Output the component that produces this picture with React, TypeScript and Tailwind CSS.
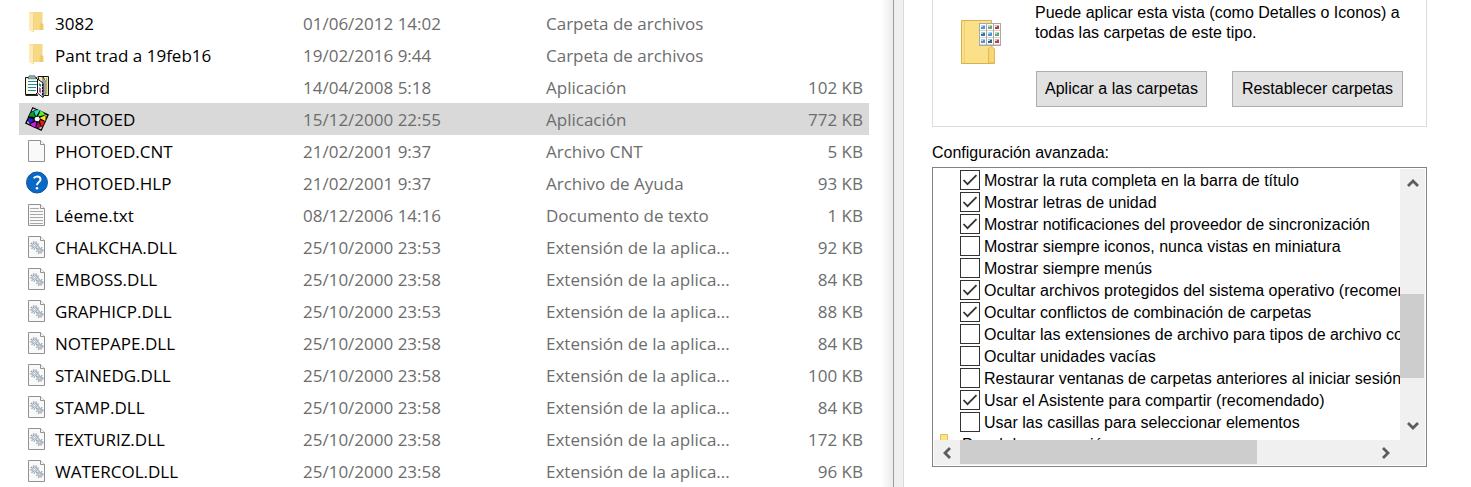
import React, { useState } from 'react';

type IconKind = 'folder' | 'clipboard' | 'photo' | 'blank' | 'help' | 'text' | 'dll';

const FILES: { name: string; date: string; type: string; size: string; icon: IconKind }[] = [
  { name: '3082', date: '01/06/2012 14:02', type: 'Carpeta de archivos', size: '', icon: 'folder' },
  { name: 'Pant trad a 19feb16', date: '19/02/2016 9:44', type: 'Carpeta de archivos', size: '', icon: 'folder' },
  { name: 'clipbrd', date: '14/04/2008 5:18', type: 'Aplicación', size: '102 KB', icon: 'clipboard' },
  { name: 'PHOTOED', date: '15/12/2000 22:55', type: 'Aplicación', size: '772 KB', icon: 'photo' },
  { name: 'PHOTOED.CNT', date: '21/02/2001 9:37', type: 'Archivo CNT', size: '5 KB', icon: 'blank' },
  { name: 'PHOTOED.HLP', date: '21/02/2001 9:37', type: 'Archivo de Ayuda', size: '93 KB', icon: 'help' },
  { name: 'Léeme.txt', date: '08/12/2006 14:16', type: 'Documento de texto', size: '1 KB', icon: 'text' },
  { name: 'CHALKCHA.DLL', date: '25/10/2000 23:53', type: 'Extensión de la aplica...', size: '92 KB', icon: 'dll' },
  { name: 'EMBOSS.DLL', date: '25/10/2000 23:58', type: 'Extensión de la aplica...', size: '84 KB', icon: 'dll' },
  { name: 'GRAPHICP.DLL', date: '25/10/2000 23:53', type: 'Extensión de la aplica...', size: '88 KB', icon: 'dll' },
  { name: 'NOTEPAPE.DLL', date: '25/10/2000 23:58', type: 'Extensión de la aplica...', size: '84 KB', icon: 'dll' },
  { name: 'STAINEDG.DLL', date: '25/10/2000 23:58', type: 'Extensión de la aplica...', size: '100 KB', icon: 'dll' },
  { name: 'STAMP.DLL', date: '25/10/2000 23:58', type: 'Extensión de la aplica...', size: '84 KB', icon: 'dll' },
  { name: 'TEXTURIZ.DLL', date: '25/10/2000 23:58', type: 'Extensión de la aplica...', size: '172 KB', icon: 'dll' },
  { name: 'WATERCOL.DLL', date: '25/10/2000 23:58', type: 'Extensión de la aplica...', size: '96 KB', icon: 'dll' },
];

const OPTIONS = [
  { label: 'Mostrar la ruta completa en la barra de título', checked: true },
  { label: 'Mostrar letras de unidad', checked: true },
  { label: 'Mostrar notificaciones del proveedor de sincronización', checked: true },
  { label: 'Mostrar siempre iconos, nunca vistas en miniatura', checked: false },
  { label: 'Mostrar siempre menús', checked: false },
  { label: 'Ocultar archivos protegidos del sistema operativo (recomendado)', checked: true },
  { label: 'Ocultar conflictos de combinación de carpetas', checked: true },
  { label: 'Ocultar las extensiones de archivo para tipos de archivo conocidos', checked: false },
  { label: 'Ocultar unidades vacías', checked: false },
  { label: 'Restaurar ventanas de carpetas anteriores al iniciar sesión', checked: false },
  { label: 'Usar el Asistente para compartir (recomendado)', checked: true },
  { label: 'Usar las casillas para seleccionar elementos', checked: false },
];

function Gear({ x, y, r }: { x: number; y: number; r: number }) {
  return (
    <g transform={`translate(${x} ${y})`} fill="none" stroke="#9aa5b1">
      <circle r={r} strokeWidth="1.6" strokeDasharray="1.3 1.2" />
      <circle r={r - 1.1} strokeWidth="0.9" fill="#e9ecef" />
      <circle r="1" strokeWidth="0.7" fill="#ffffff" />
    </g>
  );
}

function Page({ children }: { children?: React.ReactNode }) {
  return (
    <svg className="size-6 shrink-0" viewBox="0 0 24 24">
      <path d="M3.5 1.5h12l4 4v17h-16z" fill="#f9f9fa" stroke="#919191" />
      <path d="M15.5 1.5v4h4" fill="#ffffff" stroke="#919191" />
      {children}
    </svg>
  );
}

function FileIcon({ kind }: { kind: IconKind }) {
  switch (kind) {
    case 'folder':
      return (
        <svg className="size-6 shrink-0" viewBox="0 0 24 24">
          <path d="M8 1h9.500v11.500l.8.8V19H8z" fill="#f6d985" />
          <path d="M14.500 13l1.500-1.500 2.300 1.800V19h-3.800z" fill="#efcb70" />
          <path d="M4 1h5v18H4z" fill="#f8df95" />
          <path d="M4 1l4.500 2.500v18L4 19z" fill="#fdeab4" />
          <path d="M8.500 3.500v17.500" stroke="#efcf78" strokeWidth="0.8" />
        </svg>
      );
    case 'clipboard':
      return (
        <svg className="size-6 shrink-0" viewBox="0 0 24 24">
          <path d="M.5 2.500h11v17H.5z" fill="#fbfbd6" stroke="#111111" />
          <path d="M3 4h9v14H3z" fill="#ffffff" />
          <path d="M4 .8h6l1 3H3z" fill="#8fb0b4" stroke="#35565c" strokeWidth="0.6" />
          <path d="M3 6.500h9M3 9.500h9M3 12.500h8M3 15.500h8" stroke="#228c96" />
          <path d="M.5 20.200h12.500" stroke="#111111" strokeWidth="1.400" />
          <path d="M13 1.500h10.500v19H17z" fill="#efedae" stroke="#111111" />
          <path d="M17 4h4v14h-4z" fill="#ffffff" />
          <path d="M21.700 3v16" stroke="#a9a763" />
          <path d="M18 2l2 3v15l-2 2z" fill="#ffffff" stroke="#111111" strokeWidth="0.8" />
          <path d="M12.500 4l5.500 4v14.500l-5.500-4.500z" fill="#ffffff" stroke="#111111" />
          <path d="M14 8l2 1.400v2.500L14 10.500z" fill="#258a4f" />
          <path d="M14 12l2 1.400v5L14 17z" fill="#b857c2" />
          <path d="M17.500 9v12" stroke="#111111" strokeWidth="1.200" strokeDasharray="2 1" />
        </svg>
      );
    case 'photo':
      return (
        <svg className="size-6 shrink-0" viewBox="0 0 24 24">
          <path d="M7.500 0L24 7.500 16.500 24 0 16.500z" fill="#000000" />
          <path d="M8 1.500l3 1.300-4.500 2zM22 8.200l-1.500 3.500-2-5zM16 22.200l-3.500-1.500 5-2zM1.800 16l1.700-3.500 2 5z" fill="#d0d0d0" />
          <circle cx="12" cy="12" r="9" fill="#000000" />
          <path d="M10 10L4 9.500Q5 5.500 8.500 4z" fill="#0c9b28" />
          <path d="M11 9.500L9 4q3-1.500 6-.8z" fill="#22dfd0" />
          <path d="M13 9.500L15.500 3.500Q19 5 20 8z" fill="#59ee24" />
          <path d="M14.500 11l5.500-2.500q1.300 3 .3 5.500z" fill="#f6ee18" />
          <path d="M14.500 13l5.300 1.500Q19 18 16.500 19.500z" fill="#ef1424" />
          <path d="M13 14.500l3 5Q13.500 21 11 20.500z" fill="#a00d50" />
          <path d="M11 14.500l-.5 6Q7 20 5 17z" fill="#cc1ce8" />
          <path d="M9.500 13l-5 3.500Q3 13.500 3.500 10.500z" fill="#2a25e0" />
          <path d="M10.500 10l3-.3 1.500 2.300-1.500 2.300-3-.3-1-2z" fill="#ffffff" />
        </svg>
      );
    case 'help':
      return (
        <svg className="size-6 shrink-0" viewBox="0 0 24 24">
          <circle cx="12" cy="11.500" r="10.500" fill="#0868c5" stroke="#07539f" />
          <path d="M8.800 7.400q1-2 3.300-2 3.400 0 3.400 2.900 0 1.700-1.800 3-1.700 1.200-1.700 3" fill="none" stroke="#ffffff" strokeWidth="2" />
          <circle cx="12" cy="17.200" r="1.300" fill="#ffffff" />
        </svg>
      );
    case 'text':
      return (
        <Page>
          <path d="M5 5.500h9M5 8.500h13M5 11.500h13M5 14.500h13M5 17.500h13M5 20.500h13" stroke="#a8a8a8" />
        </Page>
      );
    case 'dll':
      return (
        <Page>
          <Gear x={9.500} y={10.500} r={3.600} />
          <Gear x={14.800} y={15.200} r={3} />
        </Page>
      );
    default:
      return <Page />;
  }
}

function PreviewFolder() {
  const dots = ['#4f94cf', '#6fa66c', '#c43c2c', '#3e6ea8', '#4f94cf', '#6fa66c', '#4f94cf', '#35618f', '#c43c2c'];
  return (
    <svg className="h-11 w-10" viewBox="0 0 40 44">
      <path d="M.5.5h30v26l3 3v14H.5z" fill="#fbe08a" stroke="#d9b14a" />
      <path d="M3.500 1v42" stroke="#f3cf6c" />
      <path d="M27.500 43V29l3-3 3 3v14z" fill="#f7d675" stroke="#e2b94f" />
      <path d="M18 3h22v23H18z" fill="#a9a9a9" />
      {dots.map((color, i) => (
        <g key={i} transform={`translate(${19 + (i % 3) * 7} ${4 + Math.floor(i / 3) * 7})`}>
          <path d="M0 0h6v6.500H0z" fill="#ffffff" />
          <path d="M1 1.500h4v3.500H1z" fill={color} />
          <path d="M1 1.500h2v1.500H1z" fill="#b9d8ee" />
        </g>
      ))}
    </svg>
  );
}

function Chevron({ d }: { d: string }) {
  return (
    <svg className="size-3" viewBox="0 0 12 12" fill="none" stroke="#5c5c5c" strokeWidth="2.800">
      <path d={d} />
    </svg>
  );
}

export default function App() {
  const [selected, setSelected] = useState('PHOTOED');
  const [checks, setChecks] = useState(OPTIONS.map((o) => o.checked));

  const toggle = (index: number) => {
    setChecks((prev) => prev.map((c, i) => (i === index ? !c : c)));
  };

  return (
    <main className="grid grid-cols-[893fr_11px_567fr] bg-white text-black">
      {/* File list */}
      <section className="min-w-0 overflow-hidden bg-linear-to-l from-[#ececec] to-white to-[12px] pt-[7px] pr-6 pl-[19px] font-['Open_Sans',sans-serif] text-[17px] leading-6">
        <table className="w-full table-fixed whitespace-nowrap">
          <colgroup>
            <col className="w-[284px]" />
            <col className="w-[243px]" />
            <col />
            <col className="w-[120px]" />
          </colgroup>
          <tbody className="text-[#6d6d6d]">
            {FILES.map((file) => (
              <tr
                key={file.name}
                onClick={() => setSelected(file.name)}
                className={`h-8 ${selected === file.name ? 'bg-[#d9d9d9]' : ''}`}
              >
                <td className="p-0 text-black">
                  <div className="flex items-center gap-[6px] pl-[6px]">
                    <FileIcon kind={file.icon} />
                    <span className="pt-0.5">{file.name}</span>
                  </div>
                </td>
                <td className="p-0 pt-0.5">{file.date}</td>
                <td className="p-0 pt-0.5">{file.type}</td>
                <td className="p-0 pt-0.5 pr-[6px] text-right">{file.size}</td>
              </tr>
            ))}
          </tbody>
        </table>
      </section>

      {/* Window edge */}
      <div className="border-r border-l border-r-[#d9d9d9] border-l-[#9c9c9c] bg-[#f0f0f0]" />

      {/* Folder options */}
      <section className="min-w-0 pr-11 pl-7 font-['Liberation_Sans',sans-serif] text-base leading-5">
        <div className="flex h-[127px] border border-t-0 border-[#dcdcdc] pt-[3px] pl-7">
          <div className="w-[74px] shrink-0 pt-[17px]">
            <PreviewFolder />
          </div>
          <div className="min-w-0">
            <p>
              Puede aplicar esta vista (como Detalles o Iconos) a
              <br />
              todas las carpetas de este tipo.
            </p>
            <div className="mt-7 flex gap-[25px] pl-px">
              <button className="h-9 w-[171px] border border-[#adadad] bg-[#e1e1e1] whitespace-nowrap">Aplicar a las carpetas</button>
              <button className="h-9 w-[171px] border border-[#adadad] bg-[#e1e1e1] whitespace-nowrap">Restablecer carpetas</button>
            </div>
          </div>
        </div>

        <h2 className="mt-4">Configuración avanzada:</h2>

        <div className="mt-1 grid grid-cols-[minmax(0,1fr)_25px] grid-rows-[271px_25px] border border-[#828282] p-px">
          <div className="overflow-hidden whitespace-nowrap">
            {OPTIONS.map((option, i) => (
              <label key={option.label} className="flex h-[22px] items-center gap-1 pl-[26px]">
                <span className="grid shrink-0">
                  <input
                    type="checkbox"
                    checked={checks[i]}
                    onChange={() => toggle(i)}
                    className="peer col-start-1 row-start-1 size-5 appearance-none border border-[#333333] bg-white"
                  />
                  <svg
                    className="pointer-events-none invisible col-start-1 row-start-1 size-5 peer-checked:visible"
                    viewBox="0 0 20 20"
                    fill="none"
                    stroke="#333333"
                    strokeWidth="1.800"
                  >
                    <path d="M3.500 10l4 4.200 9-9" />
                  </svg>
                </span>
                <span className="pt-0.5">{option.label}</span>
              </label>
            ))}
            <div className="flex h-[22px] items-center gap-0.5 pl-[6px]">
              <svg className="size-5 shrink-0" viewBox="0 0 20 20">
                <path d="M.5.5h7v6h11v13H.5z" fill="#fbe58c" stroke="#e3c04f" />
              </svg>
              <span className="pt-0.5">Panel de navegación</span>
            </div>
          </div>

          <div className="flex flex-col items-center bg-[#f0f0f0]">
            <button aria-label="Subir" className="flex h-7 items-center">
              <Chevron d="M1 9l5-5 5 5" />
            </button>
            <div className="w-full flex-1 pt-[97px] pr-px">
              <div className="h-[84px] bg-[#cdcdcd]" />
            </div>
            <button aria-label="Bajar" className="flex h-7 items-center">
              <Chevron d="M1 3l5 5 5-5" />
            </button>
          </div>

          <div className="flex items-center bg-[#f0f0f0]">
            <button aria-label="Izquierda" className="flex w-[26px] justify-center">
              <Chevron d="M9 1L4 6l5 5" />
            </button>
            <div className="h-full flex-1 pb-px">
              <div className="h-full w-[72%] bg-[#cdcdcd]" />
            </div>
            <button aria-label="Derecha" className="flex w-7 justify-center">
              <Chevron d="M3 1l5 5-5 5" />
            </button>
          </div>
          <div className="bg-[#f0f0f0]" />
        </div>
      </section>
    </main>
  );
}
